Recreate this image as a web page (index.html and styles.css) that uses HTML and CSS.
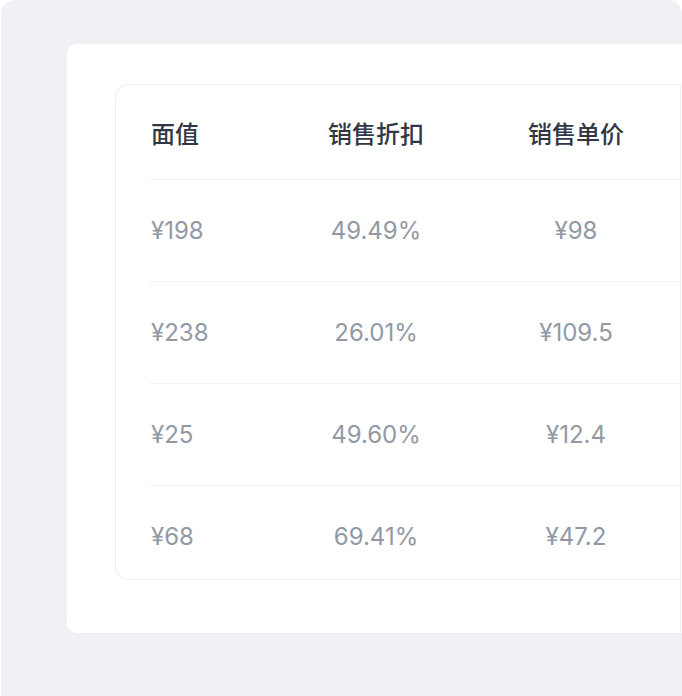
FILE: index.html
```html
<!DOCTYPE html>
<html lang="zh-CN">
<head>
<meta charset="utf-8">
<title>面值表</title>
<link rel="stylesheet" href="styles.css">
</head>
<body>
<div class="panel">
  <div class="card">
    <div class="card-main">
      <div class="table-wrap">
        <div class="table">
          <div class="row head">
            <div class="cell c1">面值</div>
            <div class="cell c2">销售折扣</div>
            <div class="cell c3">销售单价</div>
          </div>
          <div class="row">
            <div class="cell c1">¥198</div>
            <div class="cell c2">49.49%</div>
            <div class="cell c3">¥98</div>
          </div>
          <div class="row">
            <div class="cell c1">¥238</div>
            <div class="cell c2">26.01%</div>
            <div class="cell c3">¥109.5</div>
          </div>
          <div class="row">
            <div class="cell c1">¥25</div>
            <div class="cell c2">49.60%</div>
            <div class="cell c3">¥12.4</div>
          </div>
          <div class="row last">
            <div class="cell c1">¥68</div>
            <div class="cell c2">69.41%</div>
            <div class="cell c3">¥47.2</div>
          </div>
        </div>
      </div>
    </div>
    <div class="card-edge"></div>
  </div>
</div>
</body>
</html>
```
FILE: styles.css
```css
html, body {
  margin: 0;
  padding: 0;
  background: #ffffff;
  overflow: hidden;
  height: 696px;
}
body {
  font-family: Inter, "Noto Sans CJK SC", sans-serif;
}
.panel {
  margin-left: 1px;
  width: 681px;
  height: 696px;
  background: #f0f1f5;
  border-radius: 14px 14px 0 0;
  padding: 44px 0 0 66px;
  box-sizing: border-box;
  overflow: hidden;
}
.card {
  width: 700px;
  background: #ffffff;
  border-radius: 10px;
  display: flex;
  align-items: stretch;
}
.card-main {
  width: 613px;
  flex: none;
  padding: 40px 0 53px 48px;
  box-sizing: border-box;
}
.card-edge {
  width: 1px;
  flex: none;
  margin-top: 40px;
  background: #eeeff2;
}
.table-wrap {
  width: 565px;
  border: 1px solid #eeeff2;
  border-right: none;
  border-radius: 14px 0 0 14px;
  box-sizing: border-box;
  padding-left: 34px;
  overflow: hidden;
}
.table {
  width: 700px;
}
.row {
  display: grid;
  grid-template-columns: 126px 200px 200px 174px;
  align-items: center;
  height: 101px;
  border-bottom: 1px solid #f0f1f3;
  font-size: 24px;
  color: #9299a5;
}
.row.head {
  height: 94px;
  color: #313843;
  font-weight: 500;
  font-family: "Noto Sans CJK SC", sans-serif;
}
.row.last {
  height: 93px;
  padding-top: 8px;
  box-sizing: border-box;
  border-bottom: none;
}
.cell.c1 {
  text-align: left;
  padding-left: 1px;
}
.cell.c2, .cell.c3 {
  text-align: center;
}
```
